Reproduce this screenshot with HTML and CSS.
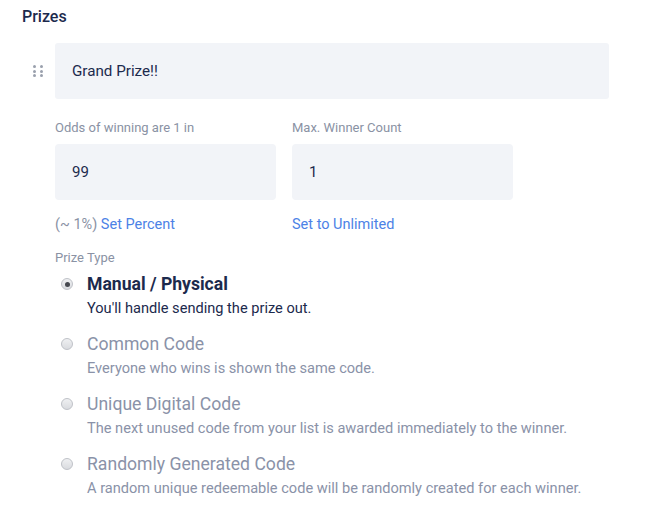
FILE: index.html
```html
<!DOCTYPE html>
<html>
<head>
<meta charset="utf-8">
<link rel="stylesheet" href="styles.css">
</head>
<body>
<div class="page">
  <h2 class="title">Prizes</h2>
  <div class="name-row">
    <span class="handle">
      <i></i><i></i><i></i><i></i><i></i><i></i>
    </span>
    <div class="name-box">Grand Prize!!</div>
  </div>
  <div class="fields">
    <div class="field">
      <div class="label">Odds of winning are 1 in</div>
      <div class="input">99</div>
      <div class="hint"><span class="muted">(~ 1%)</span> <a class="link">Set Percent</a></div>
    </div>
    <div class="field">
      <div class="label">Max. Winner Count</div>
      <div class="input">1</div>
      <div class="hint"><a class="link">Set to Unlimited</a></div>
    </div>
  </div>
  <div class="type-label">Prize Type</div>
  <div class="options">
    <div class="option active">
      <span class="radio checked"></span>
      <div class="opt-text">
        <div class="opt-title">Manual / Physical</div>
        <div class="opt-desc">You'll handle sending the prize out.</div>
      </div>
    </div>
    <div class="option">
      <span class="radio"></span>
      <div class="opt-text">
        <div class="opt-title">Common Code</div>
        <div class="opt-desc">Everyone who wins is shown the same code.</div>
      </div>
    </div>
    <div class="option">
      <span class="radio"></span>
      <div class="opt-text">
        <div class="opt-title">Unique Digital Code</div>
        <div class="opt-desc">The next unused code from your list is awarded immediately to the winner.</div>
      </div>
    </div>
    <div class="option">
      <span class="radio"></span>
      <div class="opt-text">
        <div class="opt-title">Randomly Generated Code</div>
        <div class="opt-desc">A random unique redeemable code will be randomly created for each winner.</div>
      </div>
    </div>
  </div>
</div>
</body>
</html>
```
FILE: styles.css
```css
html, body {
  margin: 0;
  padding: 0;
  background: #ffffff;
}
body {
  font-family: Roboto, "Liberation Sans", sans-serif;
  color: #1c2a4d;
}
.page {
  padding: 6px 0 0 22px;
}
.title {
  margin: 0;
  font-size: 16px;
  font-weight: 500;
  line-height: 22px;
  color: #1c2a4d;
}
.name-row {
  display: flex;
  align-items: center;
  margin-top: 15px;
}
.handle {
  width: 10px;
  height: 12px;
  margin-left: 11px;
  margin-right: 12px;
  display: grid;
  grid-template-columns: 3px 3px;
  grid-template-rows: 3px 3px 3px;
  column-gap: 4px;
  row-gap: 1.5px;
}
.handle i {
  display: block;
  width: 3px;
  height: 3px;
  border-radius: 50%;
  background: #9aa0ad;
}
.name-box {
  width: 554px;
  height: 56px;
  box-sizing: border-box;
  padding-left: 17px;
  display: flex;
  align-items: center;
  background: #f2f4f8;
  border-radius: 3px;
  font-size: 15.2px;
  color: #1c2a4d;
}
.fields {
  display: flex;
  gap: 16px;
  margin-left: 33px;
  margin-top: 21px;
}
.field {
  width: 221px;
}
.label {
  font-size: 13px;
  line-height: 16px;
  color: #8a92a4;
}
.input {
  margin-top: 8px;
  height: 56px;
  box-sizing: border-box;
  padding-left: 17px;
  display: flex;
  align-items: center;
  background: #f2f4f8;
  border-radius: 4px;
  font-size: 15px;
  color: #1c2a4d;
}
.hint {
  margin-top: 16px;
  font-size: 14.5px;
  line-height: 17px;
}
.muted {
  color: #8a92a4;
}
.link {
  color: #4c82e6;
  cursor: pointer;
}
.type-label {
  margin-left: 33px;
  margin-top: 17px;
  font-size: 13px;
  line-height: 16px;
  color: #8a92a4;
}
.options {
  margin-left: 39px;
  margin-top: 6px;
  display: flex;
  flex-direction: column;
}
.option {
  display: flex;
  align-items: flex-start;
  height: 60px;
}
.radio {
  width: 12px;
  height: 12px;
  box-sizing: border-box;
  border-radius: 50%;
  border: 1px solid #bfc2c8;
  background: linear-gradient(#eff0f2, #d9dbdf);
  margin-top: 6px;
  margin-right: 14px;
  position: relative;
  flex: none;
}
.radio.checked::after {
  content: "";
  position: absolute;
  left: 2.5px;
  top: 2.5px;
  width: 5px;
  height: 5px;
  border-radius: 50%;
  background: #45484f;
}
.opt-title {
  font-size: 17.6px;
  line-height: 24px;
  color: #8a92a8;
}
.opt-desc {
  font-size: 14.6px;
  line-height: 18px;
  margin-top: 3px;
  color: #8a92a8;
}
.option.active .opt-title {
  font-weight: 700;
  color: #1c2a4d;
}
.option.active .opt-desc {
  color: #1c2a4d;
}
```
